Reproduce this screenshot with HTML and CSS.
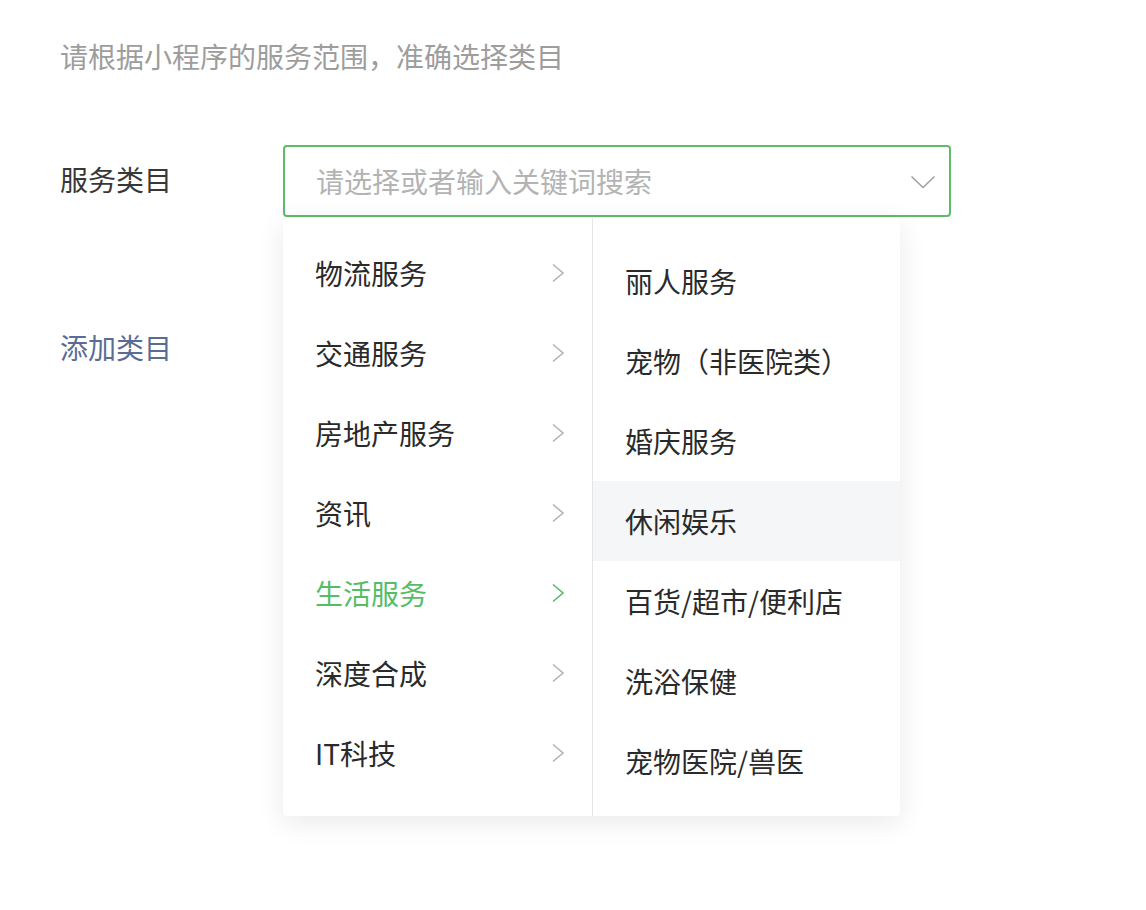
FILE: index.html
```html
<!DOCTYPE html>
<html lang="zh-CN">
<head>
<meta charset="utf-8">
<title>服务类目</title>
<link rel="stylesheet" href="styles.css">
</head>
<body>
<div class="page">
  <p class="intro">请根据小程序的服务范围，准确选择类目</p>
  <div class="form">
    <div class="row">
      <div class="label">服务类目</div>
      <div class="select">
        <div class="select-box">
          <span class="placeholder">请选择或者输入关键词搜索</span>
          <svg class="arrow-down" width="26" height="14" viewBox="0 0 26 14"><polyline points="1.5,1.5 13,12.5 24.5,1.5" fill="none" stroke="#a0a0a0" stroke-width="1.6"/></svg>
        </div>
        <div class="dropdown">
          <ul class="panel panel-left">
            <li class="item"><span>物流服务</span><svg class="arrow-right" width="14" height="20" viewBox="0 0 14 20"><polyline points="2,1.5 12,10 2,18.5" fill="none" stroke="currentColor" stroke-width="1.6"/></svg></li>
            <li class="item"><span>交通服务</span><svg class="arrow-right" width="14" height="20" viewBox="0 0 14 20"><polyline points="2,1.5 12,10 2,18.5" fill="none" stroke="currentColor" stroke-width="1.6"/></svg></li>
            <li class="item"><span>房地产服务</span><svg class="arrow-right" width="14" height="20" viewBox="0 0 14 20"><polyline points="2,1.5 12,10 2,18.5" fill="none" stroke="currentColor" stroke-width="1.6"/></svg></li>
            <li class="item"><span>资讯</span><svg class="arrow-right" width="14" height="20" viewBox="0 0 14 20"><polyline points="2,1.5 12,10 2,18.5" fill="none" stroke="currentColor" stroke-width="1.6"/></svg></li>
            <li class="item active"><span>生活服务</span><svg class="arrow-right" width="14" height="20" viewBox="0 0 14 20"><polyline points="2,1.5 12,10 2,18.5" fill="none" stroke="currentColor" stroke-width="1.6"/></svg></li>
            <li class="item"><span>深度合成</span><svg class="arrow-right" width="14" height="20" viewBox="0 0 14 20"><polyline points="2,1.5 12,10 2,18.5" fill="none" stroke="currentColor" stroke-width="1.6"/></svg></li>
            <li class="item"><span>IT科技</span><svg class="arrow-right" width="14" height="20" viewBox="0 0 14 20"><polyline points="2,1.5 12,10 2,18.5" fill="none" stroke="currentColor" stroke-width="1.6"/></svg></li>
          </ul>
          <ul class="panel panel-right">
            <li class="item"><span>丽人服务</span></li>
            <li class="item"><span>宠物（非医院类）</span></li>
            <li class="item"><span>婚庆服务</span></li>
            <li class="item hover"><span>休闲娱乐</span></li>
            <li class="item"><span>百货/超市/便利店</span></li>
            <li class="item"><span>洗浴保健</span></li>
            <li class="item"><span>宠物医院/兽医</span></li>
          </ul>
        </div>
      </div>
    </div>
    <div class="row row-add">
      <a class="add-link" href="#">添加类目</a>
    </div>
  </div>
</div>
</body>
</html>
```

FILE: styles.css
```css
html, body {
  margin: 0;
  padding: 0;
  background: #ffffff;
}

body {
  font-family: "Noto Sans CJK SC", "Noto Sans", "Liberation Sans", sans-serif;
  color: #333333;
  font-size: 28px;
}

.page {
  box-sizing: border-box;
  min-height: 910px;
  padding: 36px 0 0 60px;
}

.intro {
  margin: 0;
  font-size: 28px;
  line-height: 40px;
  color: #9d9d9d;
}

.form {
  margin-top: 69px;
}

.row {
  display: flex;
  align-items: flex-start;
}

.label {
  width: 223px;
  font-size: 28px;
  line-height: 68px;
  color: #383838;
}

.select {
  position: relative;
  width: 668px;
}

.select-box {
  box-sizing: border-box;
  height: 72px;
  border: 2px solid #5bbd6a;
  border-radius: 4px;
  display: flex;
  align-items: center;
  justify-content: space-between;
  padding: 0 13px 0 31px;
  background: #ffffff;
}

.placeholder {
  font-size: 28px;
  color: #b3b3b3;
}

.arrow-down {
  display: block;
  margin-top: 2px;
}

.dropdown {
  position: absolute;
  top: 73px;
  left: 0;
  width: 617px;
  height: 598px;
  display: flex;
  background: #ffffff;
  border-radius: 4px;
  box-shadow: 0 6px 28px rgba(0, 0, 0, 0.09);
  z-index: 2;
}

.panel {
  list-style: none;
  margin: 0;
  box-sizing: border-box;
}

.panel-left {
  width: 310px;
  padding: 15px 0 23px 0;
  border-right: 1px solid #e3e5e9;
}

.panel-right {
  flex: 1;
  padding: 23px 0 15px 0;
}

.item {
  height: 80px;
  display: flex;
  align-items: center;
  justify-content: space-between;
  font-size: 28px;
  color: #2a2a2a;
}

.panel-left .item {
  padding: 0 27px 0 32px;
}

.panel-right .item {
  padding: 0 0 0 32px;
}

.item .arrow-right {
  display: block;
  color: #b3b3b3;
}

.item.active {
  color: #55bd66;
}

.item.active .arrow-right {
  color: #55bd66;
}

.item.hover {
  background: #f5f6f8;
}

.row-add {
  margin-top: 110px;
}

.add-link {
  font-size: 28px;
  line-height: 40px;
  color: #5a6c96;
  text-decoration: none;
}
```
